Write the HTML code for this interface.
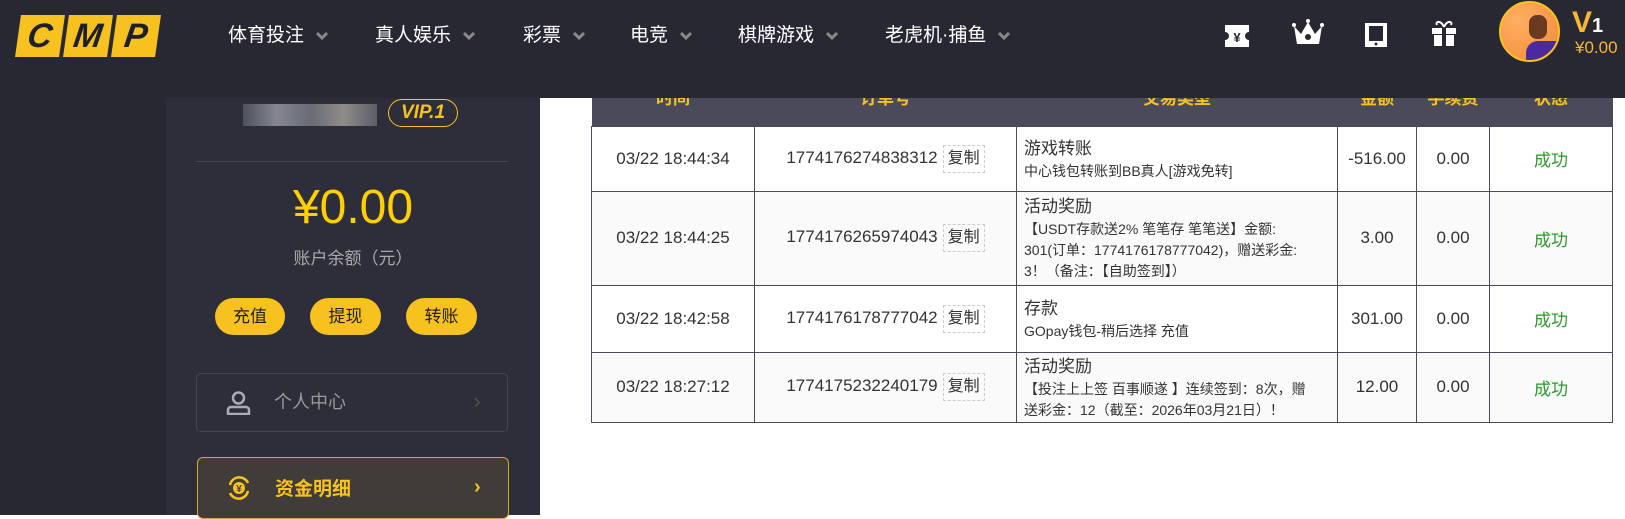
<!DOCTYPE html>
<html><head><meta charset="utf-8"><style>
*{margin:0;padding:0;box-sizing:border-box}
body{width:1625px;height:515px;overflow:hidden;background:#fff;font-family:"Liberation Sans","Noto Sans CJK SC",sans-serif;position:relative}
.abs{position:absolute}
#nav{left:0;top:0;width:1625px;height:98px;background:#282833;z-index:5}
.logo{top:15px;height:42px;width:44px;background:#f7c21f;transform:skewX(-8deg);display:flex;align-items:center;justify-content:center;font:italic 900 34px "Liberation Sans",sans-serif;color:#1f1f28}
.ni{top:22px;color:#fff;font-size:19px;line-height:28px;white-space:nowrap}
.ni svg{margin-left:12px;vertical-align:middle}
#strip{left:0;top:98px;width:166px;height:417px;background:#282833}
#side{left:166px;top:98px;width:374px;height:417px;background:#2e2e3a}
.btn{top:298px;height:37px;background:#f7c21f;border-radius:19px;color:#1f1f1f;font-size:17px;line-height:37px;text-align:center}
table{position:absolute;left:591px;top:74px;width:1022px;border-collapse:collapse;font-size:17px;color:#333}
th{background:#4a4a5a;color:#f7c21f;font-weight:bold;height:52px;vertical-align:top;padding-top:10px;font-size:17px}
td{border:1px solid #4a4a5a;text-align:center;vertical-align:middle}
tr:nth-child(odd) td{background:#fafafa}
td.t{text-align:left;padding:1px 7px;line-height:21px;font-size:14px;white-space:nowrap}
td.t b{font-weight:normal;font-size:17px;display:block;line-height:25px}
.cp{display:inline-block;border:1px dashed #ccc;padding:0 4px;margin-left:5px;font-size:16px;line-height:26px}
.ok{color:#2a9a2a}
</style></head><body>
<div id="nav" class="abs">
<div class="abs logo" style="left:18px">C</div>
<div class="abs logo" style="left:66px">M</div>
<div class="abs logo" style="left:114px">P</div>
<div class="abs ni" style="left:228px">体育投注<svg width="12" height="8"><path d="M1 1l5 5 5-5" stroke="#888" stroke-width="3" fill="none"/></svg></div>
<div class="abs ni" style="left:375px">真人娱乐<svg width="12" height="8"><path d="M1 1l5 5 5-5" stroke="#888" stroke-width="3" fill="none"/></svg></div>
<div class="abs ni" style="left:523px">彩票<svg width="12" height="8"><path d="M1 1l5 5 5-5" stroke="#888" stroke-width="3" fill="none"/></svg></div>
<div class="abs ni" style="left:630px">电竞<svg width="12" height="8"><path d="M1 1l5 5 5-5" stroke="#888" stroke-width="3" fill="none"/></svg></div>
<div class="abs ni" style="left:738px">棋牌游戏<svg width="12" height="8"><path d="M1 1l5 5 5-5" stroke="#888" stroke-width="3" fill="none"/></svg></div>
<div class="abs ni" style="left:885px">老虎机·捕鱼<svg width="12" height="8"><path d="M1 1l5 5 5-5" stroke="#888" stroke-width="3" fill="none"/></svg></div>
<svg class="abs" style="left:1224px;top:24px" width="26" height="24"><path d="M1 1h24v7a4 4 0 0 0 0 8v7H1v-7a4 4 0 0 0 0-8z" fill="#fff"/><text x="13" y="18" font-size="13" text-anchor="middle" fill="#282833" font-weight="bold">¥</text></svg>
<svg class="abs" style="left:1292px;top:18px" width="32" height="28"><path d="M2 8l7 8 7-12 7 12 7-8-3 18H5z" fill="#fff"/><circle cx="16" cy="19" r="3" fill="#282833"/><circle cx="2" cy="7" r="2" fill="#fff"/><circle cx="30" cy="7" r="2" fill="#fff"/><circle cx="16" cy="3" r="2" fill="#fff"/></svg>
<svg class="abs" style="left:1364px;top:22px" width="24" height="26"><rect x="1" y="1" width="22" height="24" fill="#fff"/><rect x="5" y="4" width="14" height="15" fill="#282833"/><circle cx="12" cy="22" r="1.5" fill="#282833"/></svg>
<svg class="abs" style="left:1430px;top:19px" width="28" height="28"><path d="M2 9h24v6H2zM4 16h20v11H4z" fill="#fff"/><path d="M13 9v18M15 9v18" stroke="#282833" stroke-width="2"/><path d="M14 8c-3-7-9-6-7-2M14 8c3-7 9-6 7-2" stroke="#fff" stroke-width="2" fill="none"/></svg>
<div class="abs" style="left:1499px;top:1px;width:61px;height:61px;border-radius:50%;border:2px solid #f7c21f;background:radial-gradient(circle at 30% 30%,#ffb060,#f08a3a);overflow:hidden"><div style="position:absolute;left:25px;top:38px;width:40px;height:30px;background:#4b2aa0;border-radius:12px 12px 0 0"></div><div style="position:absolute;left:28px;top:12px;width:18px;height:24px;background:#6a3a20;border-radius:8px"></div></div>
<div class="abs" style="left:1572px;top:6px;color:#f7b733;font:bold 30px 'Liberation Sans',sans-serif">V<span style="color:#fff;font-size:20px">1</span></div>
<div class="abs" style="left:1575px;top:38px;color:#f7b733;font-size:17px">¥0.00</div>
</div>
<div id="strip" class="abs"></div>
<div id="side" class="abs"></div>
<div class="abs" style="left:243px;top:104px;width:134px;height:22px;background:linear-gradient(90deg,#555a66,#9a9ea8,#777b85,#a8a49a,#666a74);opacity:.8"></div>
<div class="abs" style="left:388px;top:99px;width:70px;height:28px;border:1.5px solid #f7c21f;border-radius:14px;color:#f7c21f;font:italic bold 19px 'Liberation Sans',sans-serif;text-align:center;line-height:25px">VIP.1</div>
<div class="abs" style="left:196px;top:161px;width:312px;height:1px;background:#45454f"></div>
<div class="abs" style="left:166px;top:180px;width:374px;text-align:center;color:#ffd000;font-size:48px;line-height:56px">¥0.00</div>
<div class="abs" style="left:166px;top:244px;width:374px;text-align:center;color:#aaa;font-size:17px">账户余额（元）</div>
<div class="abs btn" style="left:215px;width:70px">充值</div>
<div class="abs btn" style="left:310px;width:71px">提现</div>
<div class="abs btn" style="left:406px;width:71px">转账</div>
<div class="abs" style="left:196px;top:373px;width:312px;height:59px;border:1px solid #45454f;border-radius:5px"></div>
<svg class="abs" style="left:226px;top:391px" width="25" height="24"><circle cx="12.5" cy="7" r="5.5" stroke="#aaaabb" stroke-width="2.5" fill="none"/><path d="M2 23v-4a3 3 0 0 1 3-3h15a3 3 0 0 1 3 3v4z" stroke="#aaaabb" stroke-width="2.5" fill="none"/></svg>
<div class="abs" style="left:274px;top:388px;color:#999;font-size:18px">个人中心</div>
<div class="abs" style="left:474px;top:391px;color:#555;font-size:20px">›</div>
<div class="abs" style="left:197px;top:457px;width:312px;height:62px;border:1px solid #d8a820;border-radius:6px;background:#403c3a"></div>
<svg class="abs" style="left:226px;top:475px" width="26" height="26"><path d="M4 10a9.5 9.5 0 0 1 18-2M22 16a9.5 9.5 0 0 1-18 2" stroke="#f7c21f" stroke-width="2.5" fill="none"/><circle cx="13" cy="13" r="6" fill="#f7c21f"/><text x="13" y="17" font-size="10" text-anchor="middle" fill="#403c3a" font-weight="bold">¥</text></svg>
<div class="abs" style="left:275px;top:474px;color:#f7c21f;font-size:19px;font-weight:bold">资金明细</div>
<div class="abs" style="left:474px;top:476px;color:#f7c21f;font-size:20px;font-weight:bold">›</div>
<table>
<tr><th style="width:163px">时间</th><th style="width:262px">订单号</th><th style="width:321px">交易类型</th><th style="width:79px">金额</th><th style="width:73px">手续费</th><th>状态</th></tr>
<tr style="height:65px"><td>03/22 18:44:34</td><td>1774176274838312<span class="cp">复制</span></td><td class="t"><b>游戏转账</b>中心钱包转账到BB真人[游戏免转]</td><td>-516.00</td><td>0.00</td><td class="ok">成功</td></tr>
<tr style="height:94px"><td>03/22 18:44:25</td><td>1774176265974043<span class="cp">复制</span></td><td class="t"><b>活动奖励</b>【USDT存款送2% 笔笔存 笔笔送】金额:<br>301(订单：1774176178777042)，赠送彩金:<br>3！（备注：【自助签到】）</td><td>3.00</td><td>0.00</td><td class="ok">成功</td></tr>
<tr style="height:67px"><td>03/22 18:42:58</td><td>1774176178777042<span class="cp">复制</span></td><td class="t"><b>存款</b>GOpay钱包-稍后选择 充值</td><td>301.00</td><td>0.00</td><td class="ok">成功</td></tr>
<tr style="height:70px"><td>03/22 18:27:12</td><td>1774175232240179<span class="cp">复制</span></td><td class="t"><b>活动奖励</b>【投注上上签 百事顺遂 】连续签到：8次，赠<br>送彩金：12（截至：2026年03月21日）！</td><td>12.00</td><td>0.00</td><td class="ok">成功</td></tr>
</table>
</body></html>
